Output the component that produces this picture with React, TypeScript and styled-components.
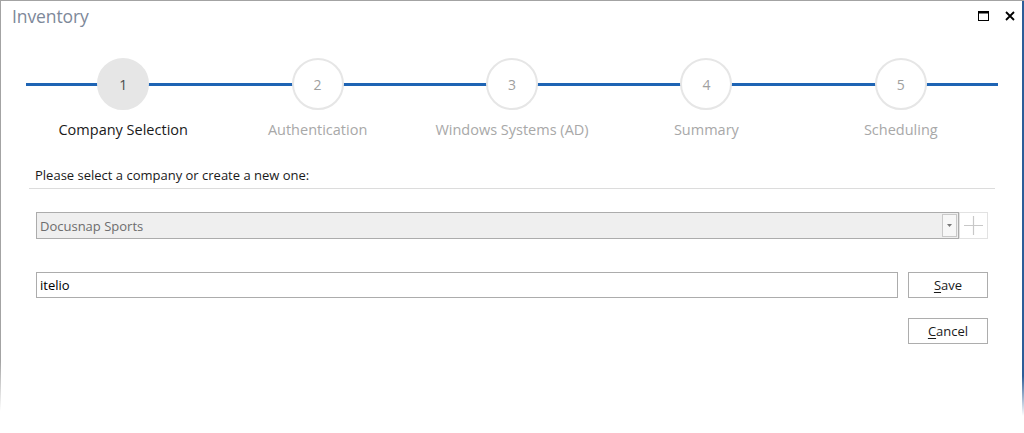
import React from "react";
import styled, { createGlobalStyle } from "styled-components";

const Global = createGlobalStyle`
  html, body { margin: 0; padding: 0; background: #fff; }
  body { font-family: "Open Sans", "Noto Sans", sans-serif; }
  * { box-sizing: border-box; }
`;

const Frame = styled.div`
  position: relative;
  width: 1024px;
  height: 433px;
  background: #fff;
  border-top: 1px solid #a3a3a3;
  overflow: hidden;
  &::before {
    content: "";
    position: absolute;
    left: 0; top: 0; width: 1px; height: 100%;
    background: linear-gradient(#a3a3a3 0, #a3a3a3 360px, #fff 410px);
  }
  &::after {
    content: "";
    position: absolute;
    right: 0; top: 0; width: 2px; height: 100%;
    background: linear-gradient(#2d5d98 0, #2d5d98 375px, #fff 415px);
  }
`;

const TitleBar = styled.div`
  display: flex;
  align-items: center;
  height: 32px;
  padding: 0 9px 0 12px;
`;

const Title = styled.div`
  flex: 1;
  font-size: 17.5px;
  color: #7d8899;
  letter-spacing: -0.1px;
  margin-top: -3px;
`;

const WinButtons = styled.div`
  display: flex;
  align-items: center;
  gap: 16px;
  margin-top: -2px;
`;

const Stepper = styled.div`
  position: relative;
  display: grid;
  grid-template-columns: repeat(5, 1fr);
  width: 972px;
  margin: 25px 0 0 26px;
  &::before {
    content: "";
    position: absolute;
    left: 0; right: 0; top: 25px;
    height: 3px;
    background: #1e64b4;
  }
`;

const Step = styled.div`
  display: flex;
  flex-direction: column;
  align-items: center;
  position: relative;
`;

const Circle = styled.div<{ $active?: boolean }>`
  width: 52px;
  height: 52px;
  border-radius: 50%;
  display: flex;
  align-items: center;
  justify-content: center;
  font-size: 14px;
  background: ${(p) => (p.$active ? "#e6e6e6" : "#fff")};
  border: 2px solid #e6e6e6;
  color: ${(p) => (p.$active ? "#4d4d4d" : "#a0a0a0")};
`;

const StepLabel = styled.div<{ $active?: boolean }>`
  margin-top: 10px;
  font-size: 14.5px;
  color: ${(p) => (p.$active ? "#1a1a1a" : "#a8a8a8")};
  white-space: nowrap;
`;

const Content = styled.div`
  padding: 0 36px 0 29px;
`;

const Prompt = styled.div`
  font-size: 13px;
  color: #1a1a1a;
  padding: 27px 0 4px 6px;
  margin-right: -7px;
  border-bottom: 1px solid #dcdcdc;
`;

const ComboRow = styled.div`
  display: flex;
  margin: 23px 0 0 7px;
  height: 27px;
`;

const Combo = styled.div`
  flex: 1;
  display: flex;
  align-items: center;
  background: #efefef;
  border: 1px solid #acacac;
  padding: 0 1px 0 3px;
  font-size: 13px;
  color: #6d6d6d;
`;

const ComboText = styled.div`
  flex: 1;
`;

const DropButton = styled.div`
  width: 15px;
  height: 23px;
  border: 1px solid #c9c9c9;
  background: #f7f7f7;
  display: flex;
  align-items: center;
  justify-content: center;
`;

const AddButton = styled.div`
  width: 29px;
  border: 1px solid #e2e2e2;
  display: flex;
  align-items: center;
  justify-content: center;
`;

const FieldRow = styled.div`
  display: flex;
  align-items: center;
  margin: 33px 0 0 7px;
  gap: 10px;
`;

const TextInput = styled.div`
  flex: 1;
  height: 26px;
  border: 1px solid #acacac;
  padding: 0 3px;
  display: flex;
  align-items: center;
  font-size: 13px;
  color: #000;
`;

const Button = styled.div`
  width: 80px;
  height: 26px;
  border: 1px solid #adadad;
  background: #fff;
  display: flex;
  align-items: center;
  justify-content: center;
  font-size: 13px;
  color: #1a1a1a;
  & u { text-decoration: underline; text-underline-offset: 2px; }
`;

const ButtonRow = styled.div`
  display: flex;
  justify-content: flex-end;
  margin-top: 20px;
`;

const steps = [
  "Company Selection",
  "Authentication",
  "Windows Systems (AD)",
  "Summary",
  "Scheduling",
];

export default function App() {
  return (
    <>
      <Global />
      <Frame>
        <TitleBar>
          <Title>Inventory</Title>
          <WinButtons>
            <svg width="11" height="10" viewBox="0 0 11 10">
              <rect x="0.5" y="0.5" width="10" height="9" fill="none" stroke="#000" strokeWidth="1" />
              <rect x="0" y="0" width="11" height="2.5" fill="#000" />
            </svg>
            <svg width="10" height="10" viewBox="0 0 10 10">
              <path d="M1 1 L9 9 M9 1 L1 9" stroke="#000" strokeWidth="1.8" />
            </svg>
          </WinButtons>
        </TitleBar>
        <Stepper>
          {steps.map((s, i) => (
            <Step key={s}>
              <Circle $active={i === 0}>{i + 1}</Circle>
              <StepLabel $active={i === 0}>{s}</StepLabel>
            </Step>
          ))}
        </Stepper>
        <Content>
          <Prompt>Please select a company or create a new one:</Prompt>
          <ComboRow>
            <Combo>
              <ComboText>Docusnap Sports</ComboText>
              <DropButton>
                <svg width="5" height="3" viewBox="0 0 5 3">
                  <path d="M0 0 L5 0 L2.5 3 Z" fill="#777" />
                </svg>
              </DropButton>
            </Combo>
            <AddButton>
              <svg width="19" height="19" viewBox="0 0 19 19">
                <path d="M9.5 0 V19 M0 9.5 H19" stroke="#c8c8c8" strokeWidth="1.2" />
              </svg>
            </AddButton>
          </ComboRow>
          <FieldRow>
            <TextInput>itelio</TextInput>
            <Button>
              <span><u>S</u>ave</span>
            </Button>
          </FieldRow>
          <ButtonRow>
            <Button>
              <span><u>C</u>ancel</span>
            </Button>
          </ButtonRow>
        </Content>
      </Frame>
    </>
  );
}
